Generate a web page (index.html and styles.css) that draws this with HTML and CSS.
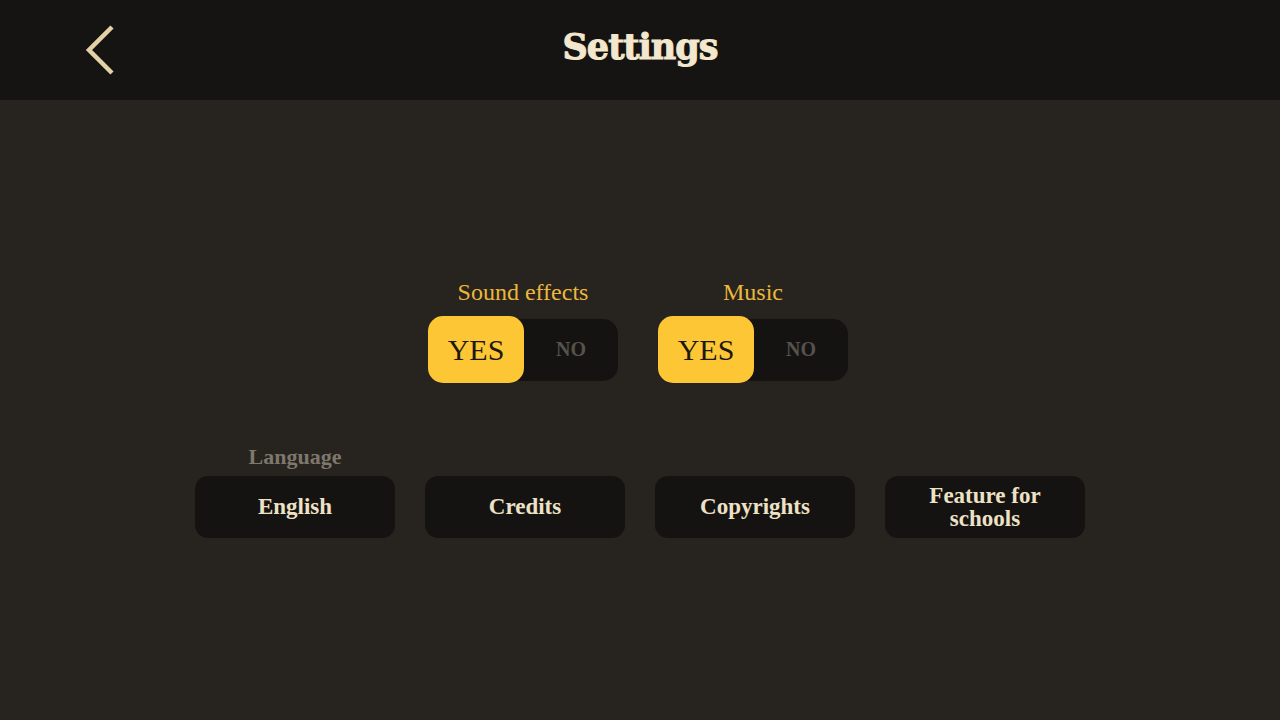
FILE: index.html
```html
<!DOCTYPE html>
<html lang="en">
    <head>
        <meta charset="UTF-8" />
        <meta name="viewport" content="width=device-width, initial-scale=1.0" />
        <title>Settings</title>
        <link rel="stylesheet" href="styles.css">
    </head>
    <body>
        <header class="topbar">
            <button class="back" aria-label="Back">
                <svg width="34" height="52" viewBox="0 0 34 52">
                    <polyline points="29,3 6,26 29,49" fill="none" stroke="#e3d2a6" stroke-width="4.5" />
                </svg>
            </button>
            <h1 class="title">Settings</h1>
        </header>
        <main class="content">
            <div class="toggles">
                <div class="toggleGroup">
                    <span class="toggleLabel">Sound effects</span>
                    <div class="toggle">
                        <span class="knob">YES</span>
                        <span class="off">NO</span>
                    </div>
                </div>
                <div class="toggleGroup">
                    <span class="toggleLabel">Music</span>
                    <div class="toggle">
                        <span class="knob">YES</span>
                        <span class="off">NO</span>
                    </div>
                </div>
            </div>
            <div class="buttons">
                <div class="buttonCol">
                    <span class="buttonLabel">Language</span>
                    <button class="menuBtn">English</button>
                </div>
                <div class="buttonCol">
                    <button class="menuBtn">Credits</button>
                </div>
                <div class="buttonCol">
                    <button class="menuBtn">Copyrights</button>
                </div>
                <div class="buttonCol">
                    <button class="menuBtn">Feature for<br />schools</button>
                </div>
            </div>
        </main>
    </body>
</html>
```

FILE: styles.css
```css
* {
    margin: 0;
    padding: 0;
    box-sizing: border-box;
}
html,
body {
    width: 100%;
    height: 100%;
    background-color: #27231f;
    font-family: "DejaVu Serif", "Liberation Serif", serif;
}
body {
    display: flex;
    flex-direction: column;
}
.topbar {
    height: 100px;
    flex-shrink: 0;
    background-color: #161412;
    display: flex;
    align-items: center;
    justify-content: center;
    position: relative;
}
.back {
    position: absolute;
    left: 83px;
    top: 24px;
    background: none;
    border: none;
    display: block;
    & svg {
        display: block;
    }
}
.title {
    color: #f3e7cd;
    font-size: 35px;
    font-weight: 900;
    letter-spacing: -1px;
    -webkit-text-stroke: 1px #f3e7cd;
    margin-top: -8px;
}
.content {
    flex: 1;
    display: flex;
    flex-direction: column;
    align-items: center;
    justify-content: center;
    padding-bottom: 4px;
}
.toggles {
    display: flex;
    gap: 40px;
    margin-right: 4px;
}
.toggleGroup {
    display: flex;
    flex-direction: column;
    align-items: center;
    gap: 14px;
}
.toggleLabel {
    color: #ecb73b;
    font-family: "Liberation Serif", serif;
    font-size: 24px;
    line-height: 26px;
}
.toggle {
    width: 190px;
    height: 62px;
    border-radius: 15px;
    background-color: #151311;
    display: flex;
    align-items: center;
}
.knob {
    width: 96px;
    height: 67px;
    border-radius: 15px;
    background-color: #fcc634;
    color: #1c1812;
    font-family: "Liberation Serif", serif;
    font-size: 30px;
    display: flex;
    align-items: center;
    justify-content: center;
    padding-top: 1px;
}
.off {
    flex: 1;
    text-align: center;
    color: #55524d;
    font-family: "Liberation Serif", serif;
    font-weight: bold;
    font-size: 20px;
}
.buttons {
    display: flex;
    gap: 30px;
    align-items: flex-end;
    margin-top: 63px;
}
.buttonCol {
    display: flex;
    flex-direction: column;
    align-items: center;
    gap: 6px;
}
.buttonLabel {
    color: #7e776c;
    font-family: "Liberation Serif", serif;
    font-weight: bold;
    font-size: 22px;
    line-height: 26px;
}
.menuBtn {
    width: 200px;
    height: 62px;
    border: none;
    border-radius: 13px;
    background-color: #151311;
    color: #ede1c6;
    font-family: "Liberation Serif", serif;
    font-weight: bold;
    font-size: 23px;
    line-height: 23px;
}
```
